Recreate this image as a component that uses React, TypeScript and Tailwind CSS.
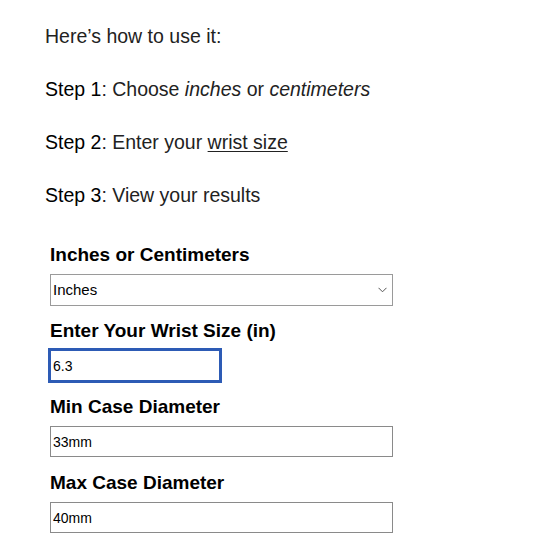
import React, { useState } from 'react';

export default function App() {
  const [unit, setUnit] = useState('Inches');
  const [wrist, setWrist] = useState('6.3');

  return (
    <div className="min-h-[560px] w-[560px] bg-white pl-[45px] pt-[25px] font-['Liberation_Sans',Arial,sans-serif] text-[#222]">
      {/* Instructions */}
      <div className="text-[19.5px] leading-[23px]">
        <p className="mb-[30px]">Here’s how to use it:</p>
        <p className="mb-[30px]">
          <span className="text-black">Step 1</span>: Choose <em>inches</em> or <em>centimeters</em>
        </p>
        <p className="mb-[30px]">
          <span className="text-black">Step 2</span>: Enter your <span className="underline underline-offset-2">wrist size</span>
        </p>
        <p>
          <span className="text-black">Step 3</span>: View your results
        </p>
      </div>

      {/* Form */}
      <div className="mt-[36px] ml-[5px] flex w-[343px] flex-col text-black">
        <label className="mb-[8px] text-[19px] font-bold leading-[23px]">Inches or Centimeters</label>
        <div className="relative mb-[13px]">
          <select
            value={unit}
            onChange={(e) => setUnit(e.target.value)}
            className="h-[32px] w-full appearance-none border border-[#9a9a9a] bg-white pl-[2px] text-[15px] outline-none"
          >
            <option>Inches</option>
            <option>Centimeters</option>
          </select>
          <svg className="pointer-events-none absolute right-[6px] top-[13px]" width="9" height="6" viewBox="0 0 9 6">
            <path d="M0.5 0.8 L4.5 4.8 L8.5 0.8" fill="none" stroke="#555" strokeWidth="1" />
          </svg>
        </div>

        <label className="mb-[8px] text-[19px] font-bold leading-[23px]">Enter Your Wrist Size (in)</label>
        <input
          value={wrist}
          onChange={(e) => setWrist(e.target.value)}
          className="mb-[14px] h-[31px] w-[170px] border border-[#2d5bb5] bg-white pl-[2px] text-[14px] outline outline-2 outline-[#2d5bb5]"
        />

        <label className="mb-[8px] text-[19px] font-bold leading-[23px]">Min Case Diameter</label>
        <input
          readOnly
          value="33mm"
          className="mb-[14px] h-[31px] w-full border border-[#8a8a8a] bg-white pl-[2px] text-[14px] outline-none"
        />

        <label className="mb-[8px] text-[19px] font-bold leading-[23px]">Max Case Diameter</label>
        <input
          readOnly
          value="40mm"
          className="h-[31px] w-full border border-[#8a8a8a] bg-white pl-[2px] text-[14px] outline-none"
        />
      </div>
    </div>
  );
}
